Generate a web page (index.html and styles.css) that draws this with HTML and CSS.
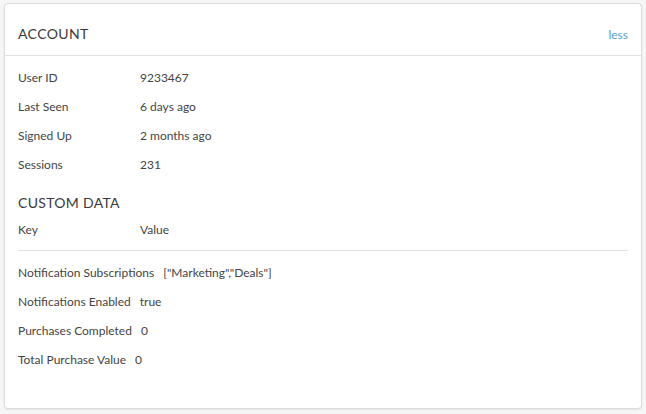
FILE: index.html
```html
<!DOCTYPE html>
<html lang="en">
<head>
  <meta charset="UTF-8" />
  <title>Account</title>
  <link rel="stylesheet" href="styles.css">
</head>
<body>
  <div class="card">
    <div class="card-header">
      <h2>ACCOUNT</h2>
      <a href="#" class="toggle">less</a>
    </div>
    <div class="card-body">
      <div class="row"><span class="label">User ID</span><span>9233467</span></div>
      <div class="row"><span class="label">Last Seen</span><span>6 days ago</span></div>
      <div class="row"><span class="label">Signed Up</span><span>2 months ago</span></div>
      <div class="row"><span class="label">Sessions</span><span>231</span></div>

      <h3>CUSTOM DATA</h3>
      <div class="row head"><span class="label">Key</span><span>Value</span></div>
      <div class="custom">
        <div class="row"><span class="key">Notification Subscriptions</span><span>["Marketing","Deals"]</span></div>
        <div class="row"><span class="key">Notifications Enabled</span><span>true</span></div>
        <div class="row"><span class="key">Purchases Completed</span><span>0</span></div>
        <div class="row"><span class="key">Total Purchase Value</span><span>0</span></div>
      </div>
    </div>
  </div>
</body>
</html>
```

FILE: styles.css
```css
body {
  margin: 0;
  padding: 3px 4px;
  background: #f6f6f6;
  font-family: Lato, "Noto Sans", sans-serif;
  color: #444;
}
.card {
  background: #fff;
  border: 1px solid #dcdcdc;
  border-radius: 4px;
  box-shadow: 0 1px 2px rgba(0,0,0,0.08);
  height: 406px;
  box-sizing: border-box;
}
.card-header {
  display: flex;
  justify-content: space-between;
  align-items: center;
  height: 51px;
  padding: 0 13px;
  border-bottom: 1px solid #e2e2e2;
}
.card-header h2 {
  margin: 0;
  font-size: 14px;
  font-weight: normal;
  letter-spacing: 0.4px;
  color: #3a3a3a;
  padding-top: 8px;
}
.toggle {
  color: #5a9fd6;
  text-decoration: none;
  font-size: 12px;
  padding-top: 10px;
}
.card-body {
  padding: 7px 13px 0;
}
.row {
  display: flex;
  height: 29px;
  align-items: center;
  font-size: 12px;
  color: #444;
}
.label {
  width: 122px;
}
.key {
  margin-right: 9px;
}
h3 {
  margin: 15px 0 0;
  height: 21px;
  font-size: 14px;
  font-weight: normal;
  letter-spacing: 0.3px;
  color: #3a3a3a;
}
.row.head {
  margin-bottom: 6px;
}
.custom {
  border-top: 1px solid #e2e2e2;
  padding-top: 7px;
}
```
